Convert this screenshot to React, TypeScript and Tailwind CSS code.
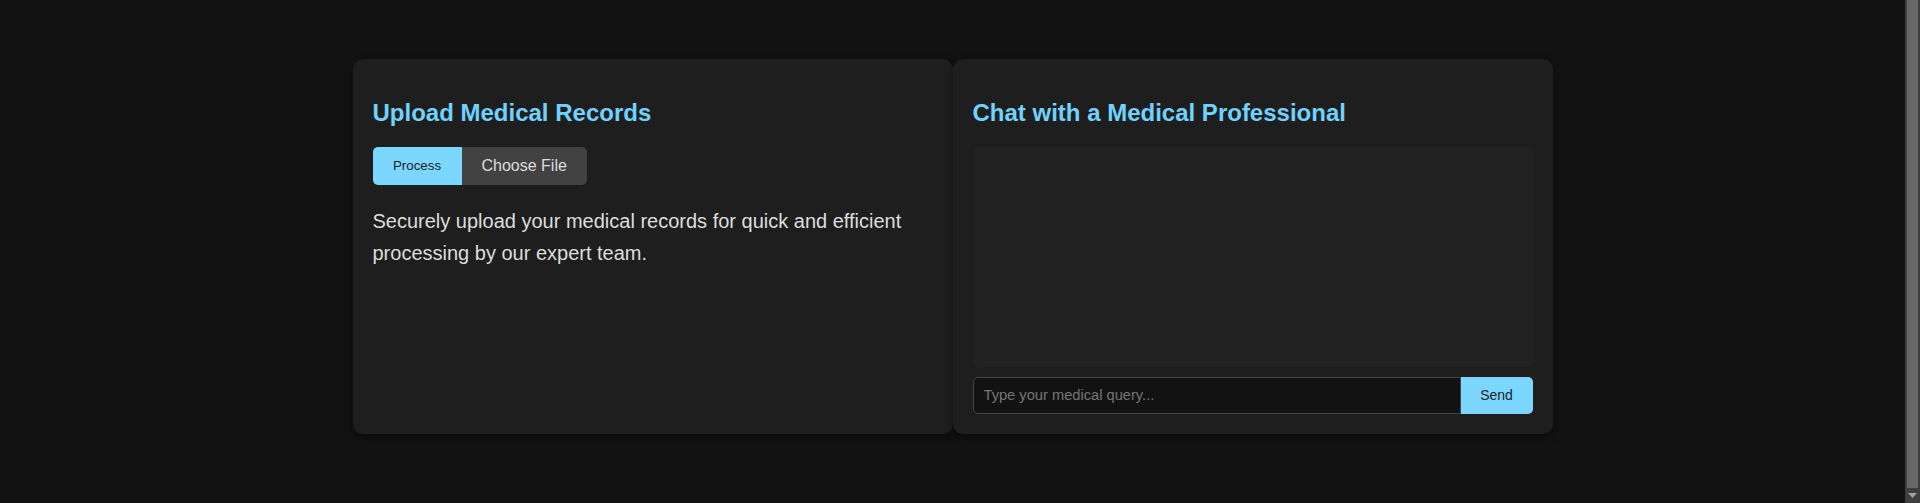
import React from "react";

export default function App() {
  return (
    <div
      className="min-h-[503px] bg-[#121212] pt-[59px] pb-[69px] pr-[15px]"
      style={{ fontFamily: '"Liberation Sans", Arial, sans-serif' }}
    >
      <div className="mx-auto flex w-[1200px]">
        {/* Left card */}
        <div className="w-[600px] rounded-[10px] bg-[#1e1e1e] p-[20px] shadow-[0_4px_10px_rgba(0,0,0,0.35)]">
          <h2 className="my-[20px] text-[24px] font-bold leading-[27.6px] text-[#6fd3fd]">
            Upload Medical Records
          </h2>
          <div className="flex h-[38px]">
            <button className="h-[38px] w-[89px] rounded-l-[5px] bg-[#7bd7ff] text-[13.33px] text-[#1e1e1e]">
              Process
            </button>
            <div className="flex h-[38px] items-center rounded-r-[5px] bg-[#424242] px-[20px] text-[16px] text-[#dddddd]">
              Choose File
            </div>
          </div>
          <p className="mt-[20px] text-[20px] leading-[32px] text-[#dddddd]">
            Securely upload your medical records for quick and efficient
            processing by our expert team.
          </p>
        </div>

        {/* Right card */}
        <div className="flex w-[600px] flex-col rounded-[10px] bg-[#1e1e1e] p-[20px] shadow-[0_4px_10px_rgba(0,0,0,0.35)]">
          <h2 className="my-[20px] text-[24px] font-bold leading-[27.6px] text-[#6fd3fd]">
            Chat with a Medical Professional
          </h2>
          <div className="h-[220px] rounded-[5px] bg-[#222222]"></div>
          <div className="mt-[10px] flex h-[37px]">
            <input
              type="text"
              placeholder="Type your medical query..."
              className="h-[37px] flex-1 rounded-l-[5px] border border-[#444444] bg-[#121212] px-[10px] text-[14.67px] text-[#dddddd] outline-none placeholder:text-[#767676]"
              style={{ fontFamily: '"Liberation Sans", Arial, sans-serif' }}
            />
            <button className="h-[37px] w-[72px] rounded-r-[5px] bg-[#7bd7ff] text-[14px] text-[#1e1e1e]">
              Send
            </button>
          </div>
        </div>
      </div>

      {/* Fake window scrollbar */}
      <div className="fixed right-0 top-0 flex h-[503px] w-[15px] flex-col bg-[#3f3f3f]">
        <div className="mx-[2px] flex-1 bg-[#686868]"></div>
        <div className="flex h-[15px] items-center justify-center">
          <svg width="9" height="5" viewBox="0 0 9 5">
            <path d="M0 0 L9 0 L4.5 5 Z" fill="#a3a3a3" />
          </svg>
        </div>
      </div>
    </div>
  );
}
